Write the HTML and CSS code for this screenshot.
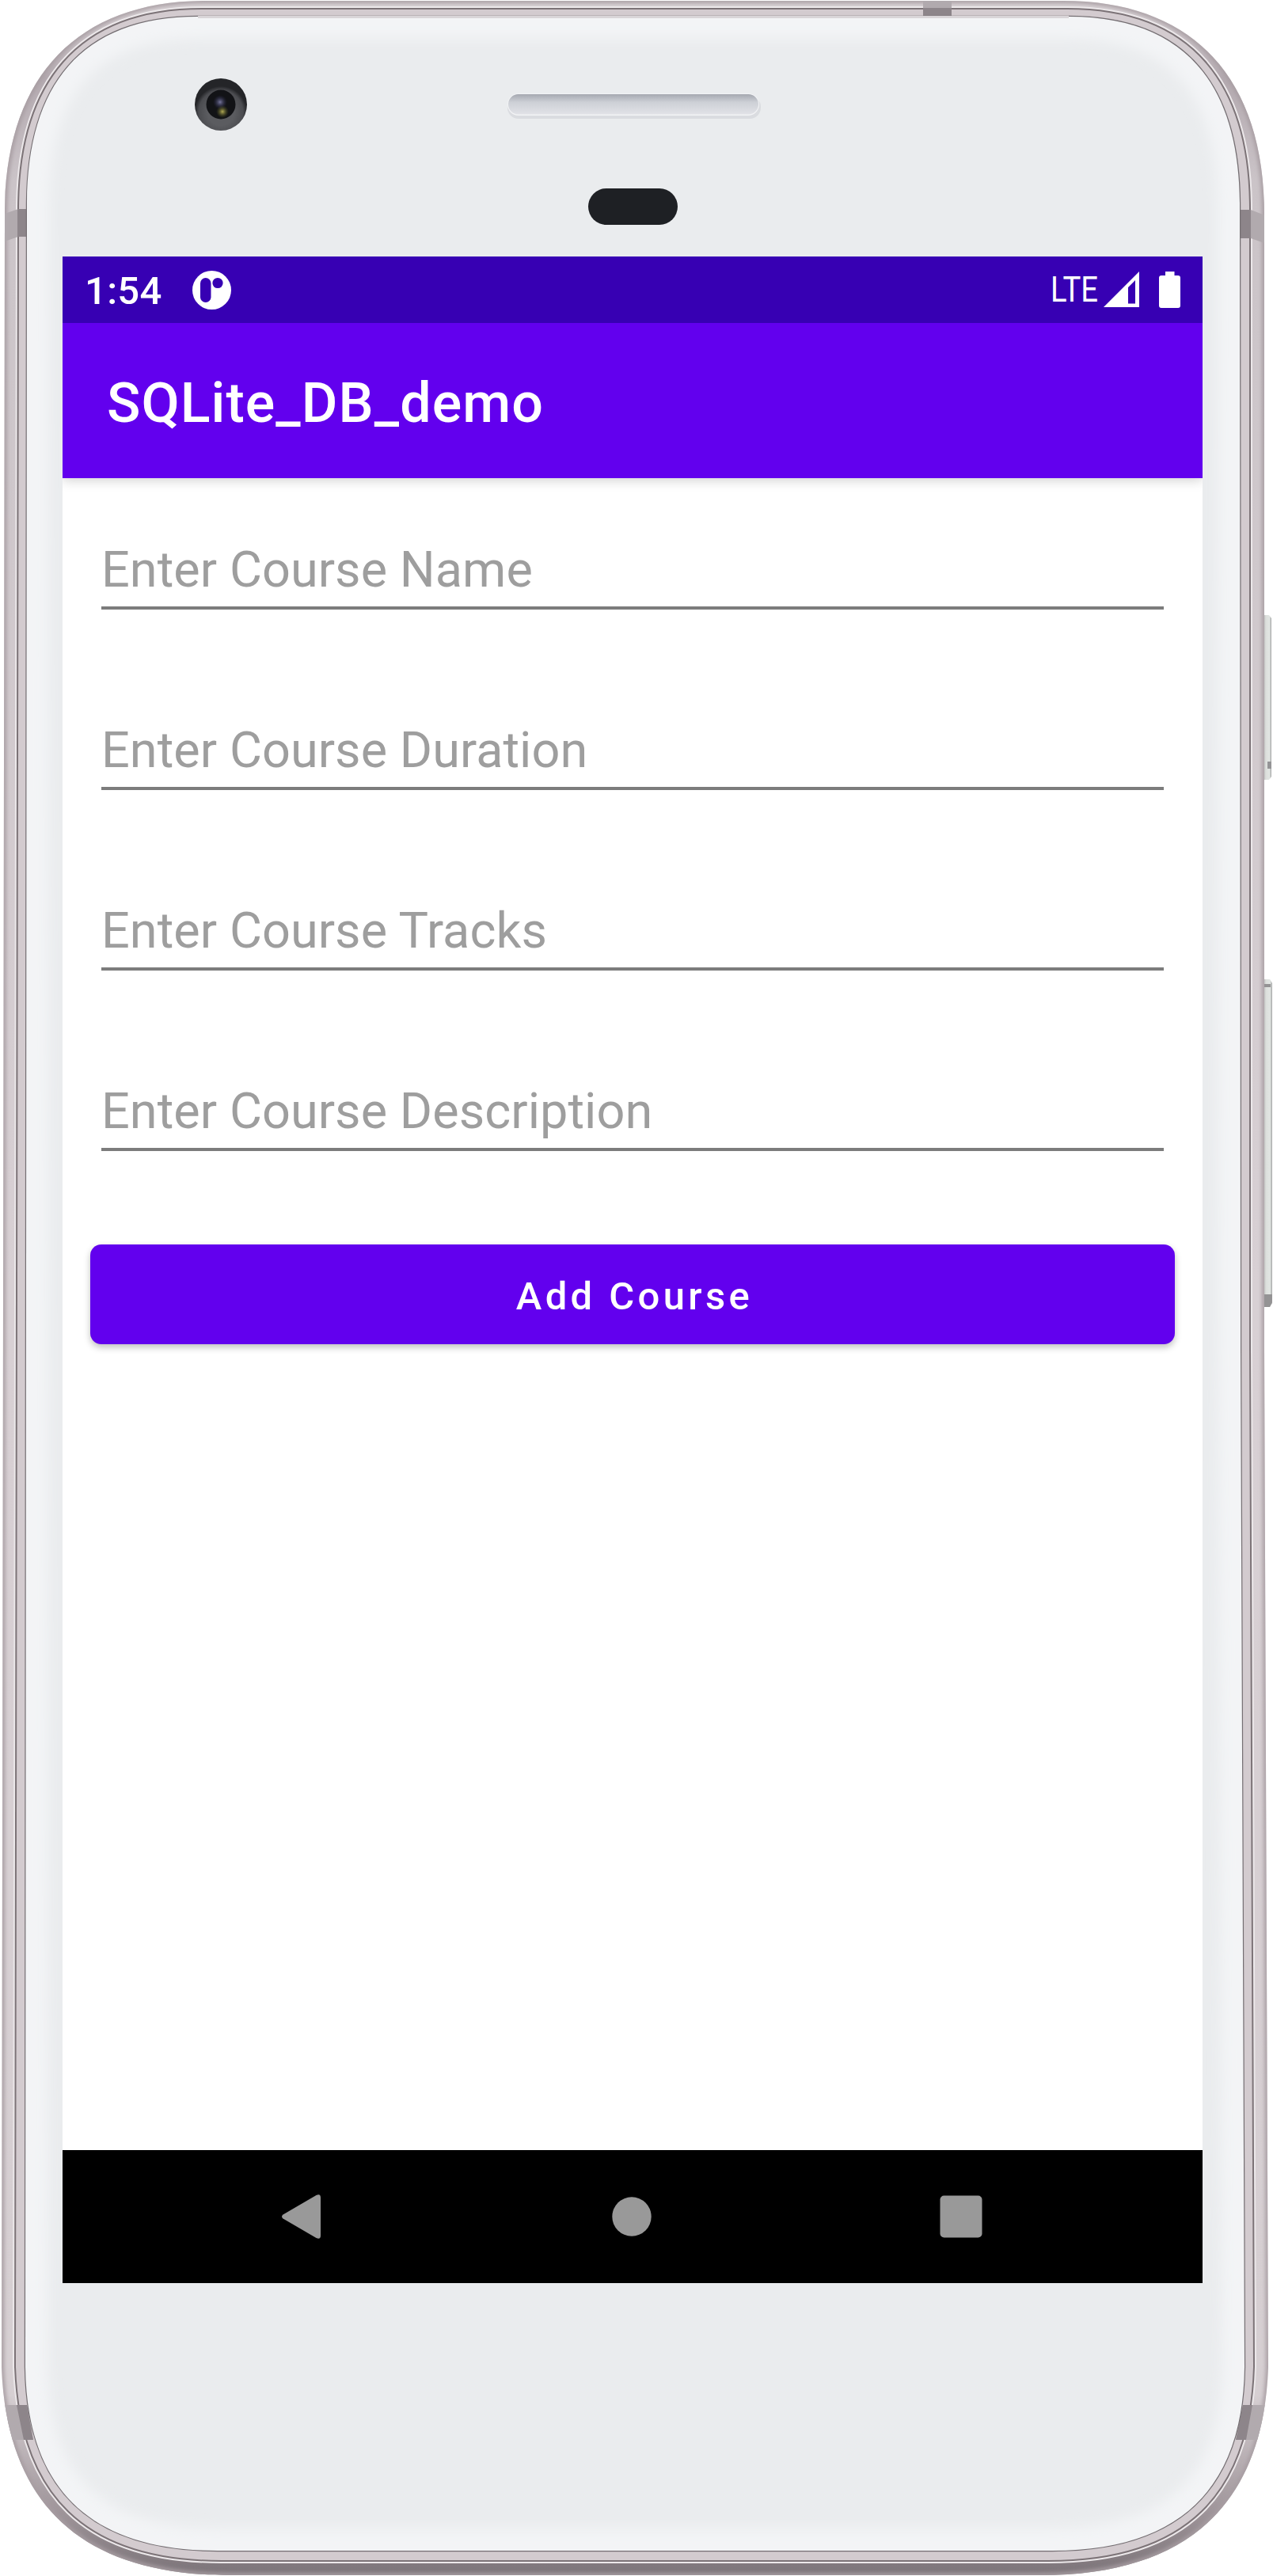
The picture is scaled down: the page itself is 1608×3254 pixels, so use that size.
FILE: index.html
```html
<!DOCTYPE html>
<html lang="en">
<head>
<meta charset="utf-8">
<title>SQLite_DB_demo</title>
<link rel="stylesheet" href="styles.css">
</head>
<body>
<div class="phone">
  <svg class="shell" viewBox="0 0 1608 3254" width="1608" height="3254" aria-hidden="true">
    <defs>
      <linearGradient id="band" x1="0" y1="0" x2="0" y2="1">
        <stop offset="0" stop-color="#dad4d7"/><stop offset=".03" stop-color="#b3a9af"/>
        <stop offset=".07" stop-color="#cbc4c8"/><stop offset=".5" stop-color="#d8d0d4"/>
        <stop offset=".93" stop-color="#d6cfd2"/><stop offset=".975" stop-color="#9f959a"/><stop offset="1" stop-color="#7b7378"/>
      </linearGradient>
      <linearGradient id="btn" x1="0" y1="0" x2="1" y2="0">
        <stop offset="0" stop-color="#b9bab9"/><stop offset=".3" stop-color="#dcdfdc"/>
        <stop offset=".75" stop-color="#e2e6e3"/><stop offset="1" stop-color="#a3a5a5"/>
      </linearGradient>
      <linearGradient id="grille" x1="0" y1="0" x2="0" y2="1">
        <stop offset="0" stop-color="#a5a8b0"/><stop offset=".4" stop-color="#cdd0d6"/><stop offset="1" stop-color="#e1e2e7"/>
      </linearGradient>
      <radialGradient id="ring" cy=".65"><stop offset=".5" stop-color="#5b5c60"/><stop offset=".85" stop-color="#4b4c50"/><stop offset="1" stop-color="#242528"/></radialGradient>
      <radialGradient id="glint"><stop offset="0" stop-color="#b5ad55"/><stop offset="1" stop-color="#4c5020" stop-opacity="0"/></radialGradient>
      <radialGradient id="glint2"><stop offset="0" stop-color="#77779c"/><stop offset="1" stop-color="#26264a" stop-opacity="0"/></radialGradient>
      <filter id="soft" x="-10%" y="-10%" width="120%" height="120%"><feGaussianBlur stdDeviation="8"/></filter>
      <filter id="soft2" x="-10%" y="-10%" width="120%" height="120%"><feGaussianBlur stdDeviation="2.5"/></filter>
      <path id="outer" d="M6 270C6 100 95 1 260 1H1343C1508 1 1597 100 1597 270V1700L1602 2990C1596 3160 1504 3253 1314 3253H290C100 3253 8 3160 2 2990Z"/>
      <path id="groove" d="M23 265C23 105 97 11 255 11H1348C1506 11 1579 105 1579 265V1700L1584 2990C1579 3150 1499 3235 1324 3235H280C105 3235 25 3150 19 2990Z"/>
      <path id="face" d="M34 260C34 110 100 21 250 21H1350C1500 21 1566 110 1566 260L1567 1700L1572 2990C1570 3140 1494 3222 1329 3222H275C110 3222 34 3140 32 2990Z"/>
      <clipPath id="outerClip"><use href="#outer"/></clipPath>
      <clipPath id="faceClip"><use href="#face"/></clipPath>
    </defs>
    <!-- side keys -->
    <path d="M1596 777H1603L1606 781V981L1603 985H1596Z" fill="url(#btn)"/>
    <path d="M1601 962H1606V971H1601Z" fill="#949496"/>
    <path d="M1596 1237H1604L1607 1242V1646L1604 1651H1596Z" fill="url(#btn)"/>
    <path d="M1597 1243H1605V1247H1597ZM1597 1635H1607V1645L1604 1651H1597Z" fill="#949394"/>
    <!-- metal band -->
    <use href="#outer" fill="url(#band)"/>
    <g clip-path="url(#outerClip)">
      <use href="#outer" fill="none" stroke="#a79da2" stroke-width="6" filter="url(#soft2)"/>
      <use href="#groove" fill="none" stroke="#ece8ea" stroke-width="6"/>
      <use href="#groove" fill="#d3cbcf" stroke="#7c7377" stroke-width="2"/>
      <path d="M0 272L23 264H34V299H23L0 307ZM1603 274L1580 265H1566V301H1580L1603 309ZM1166 0H1202V21H1166ZM0 3038H34L42 3082H0ZM1604 3038H1570L1561 3082H1604Z" fill="#b1aaae"/>
      <path d="M22 264H34V299H22ZM1567 265H1580V301H1567ZM1166 10H1202V21H1166ZM21 3038H34L42 3082H30ZM1582 3038H1570L1561 3082H1574Z" fill="#8d858a"/>
    </g>
    <!-- front glass -->
    <use href="#face" fill="#eaecee" stroke="#746e72" stroke-width="2.4"/>
    <g clip-path="url(#faceClip)">
      <use href="#face" fill="none" stroke="#f3f4f6" stroke-width="56" filter="url(#soft)"/>
    </g>
    <path d="M250 21.500H1350" stroke="#d9d5d8" stroke-width="3"/>
    <circle cx="279" cy="132" r="33" fill="url(#ring)"/>
    <circle cx="279" cy="132" r="18.500" fill="#121316"/>
    <circle cx="278" cy="129" r="9" fill="url(#glint2)"/>
    <circle cx="281" cy="141" r="8" fill="url(#glint)"/>
    <rect x="641" y="121" width="320" height="29" rx="14" fill="#dadce0"/>
    <rect x="641" y="118" width="318" height="28" rx="14" fill="#f2f3f5"/>
    <rect x="642" y="119" width="316" height="25.500" rx="12.700" fill="url(#grille)"/>
    <rect x="743" y="238" width="113" height="46" rx="23" fill="#1e2024"/>
  </svg>

  <main class="screen">
    <header class="status">
      <span class="clock">1:54</span>
      <svg class="notice" viewBox="0 0 49 49" width="49" height="49"><circle cx="24.500" cy="24.500" r="24.500" fill="#fff"/><rect x="10" y="9" width="13.500" height="31" rx="6.750" fill="#3700b3"/><circle cx="32" cy="15.500" r="6.600" fill="#3700b3"/></svg>
      <svg class="signals" viewBox="0 0 164 50" width="164" height="50" fill="#fff">
        <text class="lte" x="0" y="40" textLength="60" lengthAdjust="spacingAndGlyphs">LTE</text>
        <path fill-rule="evenodd" d="M67 47L112 2V47ZM98 22V42.500H107V13Z"/>
        <path d="M146 2H157.500V7H162Q165 7 165 10V45Q165 48 162 48H141Q138 48 138 45V10Q138 7 141 7H146Z" transform="translate(-1)"/>
      </svg>
    </header>
    <h1 class="appbar">SQLite_DB_demo</h1>
    <form class="form">
      <input class="field" type="text" placeholder="Enter Course Name">
      <input class="field" type="text" placeholder="Enter Course Duration">
      <input class="field" type="text" placeholder="Enter Course Tracks">
      <input class="field" type="text" placeholder="Enter Course Description">
      <button class="add" type="button">Add Course</button>
    </form>
    <nav class="nav">
      <svg viewBox="0 0 56 58" width="56" height="58"><path d="M4.500 26.500L46.500 2Q52 -.5 52 5V53Q52 58.500 46.500 56L4.500 31.500Q1.500 29 4.500 26.500Z" fill="#999"/></svg>
      <svg viewBox="0 0 56 58" width="56" height="58"><circle cx="28" cy="29" r="24.700" fill="#999"/></svg>
      <svg viewBox="0 0 56 58" width="56" height="58"><rect x="1.500" y="2.500" width="53" height="53" rx="5" fill="#999"/></svg>
    </nav>
  </main>
</div>
</body>
</html>
```
FILE: styles.css
```css
* { box-sizing: border-box; }
body { margin: 0; background: #fff; font-family: Roboto, "Liberation Sans", sans-serif; }
.phone { position: relative; width: 1608px; height: 3254px; padding: 324px 89px 370px 79px; overflow: hidden; }
.shell { position: absolute; inset: 0; }
.screen { position: relative; width: 1440px; height: 2560px; background: #fff; display: flex; flex-direction: column; }
.status { height: 84px; flex: none; background: #3700b3; display: flex; align-items: center; padding: 0 28px 0 28px; color: #fff; }
.clock { font-size: 49px; font-weight: 500; line-height: 84px; padding-top: 4px; width: 136px; letter-spacing: .3px; }
.notice { margin-top: 1px; }
.signals { margin-left: auto; overflow: visible; }
.lte { font-size: 43.500px; font-weight: 400; }
.appbar { flex: none; height: 196px; margin: 0; padding-left: 56px; background: #6200ee; color: #fff; font-size: 70px; font-weight: 500; line-height: 202px; letter-spacing: 1.05px; box-shadow: 0 3px 14px rgba(0,0,0,.18); clip-path: inset(0 0 -30px 0); }
.form { flex: 1; margin: 0; padding: 58px 35px 0; display: flex; flex-direction: column; }
.field { height: 108px; margin: 0 14px 120px; padding: 10px 0 0; border: 0; border-bottom: 4px solid #7c7c7c; border-radius: 0; background: none; font: 400 63px/1.200 Roboto, "Liberation Sans", sans-serif; letter-spacing: .05px; color: #222; outline: none; }
.field::placeholder { color: #9e9e9e; opacity: 1; }
.field:nth-of-type(4) { margin-bottom: 118px; }
.add { height: 126px; padding: 6px 0 0 5px; border: 0; border-radius: 14px; background: #6200ee; color: #fff; font: 500 49px/1.200 Roboto, "Liberation Sans", sans-serif; letter-spacing: 4.375px; box-shadow: 0 4px 9px rgba(0,0,0,.25); }
.nav { flex: none; height: 168px; background: #000; display: flex; align-items: center; justify-content: space-between; padding: 0 277px 0 275px; }
.nav svg:first-child { margin-left: -1px; }
```
